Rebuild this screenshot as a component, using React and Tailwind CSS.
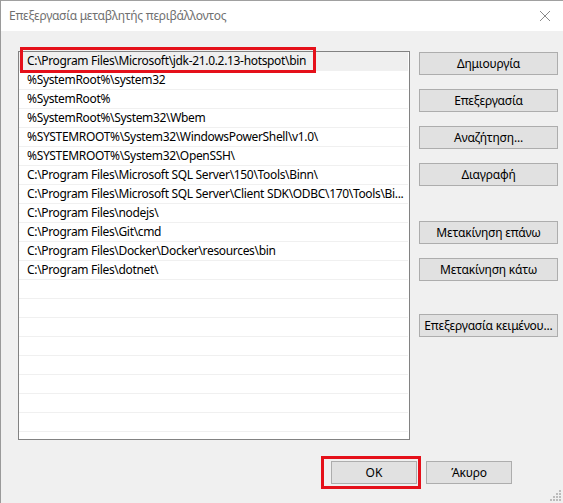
import React from "react";

const paths = [
  "C:\\Program Files\\Microsoft\\jdk-21.0.2.13-hotspot\\bin",
  "%SystemRoot%\\system32",
  "%SystemRoot%",
  "%SystemRoot%\\System32\\Wbem",
  "%SYSTEMROOT%\\System32\\WindowsPowerShell\\v1.0\\",
  "%SYSTEMROOT%\\System32\\OpenSSH\\",
  "C:\\Program Files\\Microsoft SQL Server\\150\\Tools\\Binn\\",
  "C:\\Program Files\\Microsoft SQL Server\\Client SDK\\ODBC\\170\\Tools\\Bi...",
  "C:\\Program Files\\nodejs\\",
  "C:\\Program Files\\Git\\cmd",
  "C:\\Program Files\\Docker\\Docker\\resources\\bin",
  "C:\\Program Files\\dotnet\\",
  "", "", "", "", "", "", "", "",
];

function Btn({ children, className = "" }) {
  return (
    <button
      className={
        "h-[23px] w-[139px] border border-[#adadad] bg-[#e1e1e1] text-[12px] tracking-[-0.2px] text-black leading-none flex items-center justify-center " +
        className
      }
    >
      {children}
    </button>
  );
}

export default function App() {
  return (
    <div
      className="relative w-[563px] h-[503px] bg-[#f0f0f0] flex flex-col border-l border-[#9a9a9a]"
      style={{ fontFamily: '"Noto Sans", "Open Sans", sans-serif' }}
    >
      {/* title bar */}
      <div className="h-[31px] bg-white border-t border-[#a0a0a0] flex items-center justify-between pl-[8px] pr-[6px]">
        <span className="text-[12px] text-[#707070] tracking-[-0.25px]">
          Επεξεργασία μεταβλητής περιβάλλοντος
        </span>
        <svg width="22" height="22" viewBox="0 0 22 22" className="mr-[1px]">
          <path d="M6 6 L16 16 M16 6 L6 16" stroke="#8a8a8a" strokeWidth="1" />
        </svg>
      </div>

      {/* body */}
      <div className="flex pl-[17px] pt-[20px] gap-[9px]">
        <div className="w-[392px] h-[389px] bg-white border border-[#828282] overflow-hidden pr-[1px]">
          {paths.map((p, i) => (
            <div
              key={i}
              className={
                "h-[19px] border-b border-[#f0f0f0] pl-[8px] pr-[2px] text-[12px] tracking-[-0.33px] leading-[18px] text-black whitespace-nowrap " +
                (i === 0 ? "bg-[#efefef]" : "")
              }
            >
              {p}
            </div>
          ))}
        </div>

        <div className="flex flex-col pt-[1px]">
          <Btn>Δημιουργία</Btn>
          <Btn className="mt-[14px]">Επεξεργασία</Btn>
          <Btn className="mt-[14px]">Αναζήτηση...</Btn>
          <Btn className="mt-[14px]">Διαγραφή</Btn>
          <Btn className="mt-[35px]">Μετακίνηση επάνω</Btn>
          <Btn className="mt-[14px]">Μετακίνηση κάτω</Btn>
          <Btn className="mt-[33px]">Επεξεργασία κειμένου...</Btn>
        </div>
      </div>

      {/* footer */}
      <div className="flex justify-start pl-[330px] pt-[21px] gap-[9px]">
        <button className="h-[23px] w-[86px] border border-[#adadad] bg-[#e1e1e1] text-[12px] text-black flex items-center justify-center">
          OK
        </button>
        <button className="h-[23px] w-[86px] border border-[#adadad] bg-[#e1e1e1] text-[12px] tracking-[-0.2px] text-black flex items-center justify-center">
          Άκυρο
        </button>
      </div>

      {/* resize grip */}
      <svg width="12" height="12" viewBox="0 0 12 12" className="absolute right-[1px] bottom-[1px]">
        <g fill="#bcbcbc">
          <rect x="9" y="0" width="2" height="2" />
          <rect x="6" y="3" width="2" height="2" />
          <rect x="9" y="3" width="2" height="2" />
          <rect x="3" y="6" width="2" height="2" />
          <rect x="6" y="6" width="2" height="2" />
          <rect x="9" y="6" width="2" height="2" />
          <rect x="0" y="9" width="2" height="2" />
          <rect x="3" y="9" width="2" height="2" />
          <rect x="6" y="9" width="2" height="2" />
          <rect x="9" y="9" width="2" height="2" />
        </g>
      </svg>

      {/* red highlights */}
      <div className="absolute left-[19px] top-[47px] w-[296px] h-[26px] border-[3px] border-[#e5101a] pointer-events-none" />
      <div className="absolute left-[320px] top-[456px] w-[100px] h-[33px] border-[3px] border-[#e5101a] pointer-events-none" />
    </div>
  );
}
